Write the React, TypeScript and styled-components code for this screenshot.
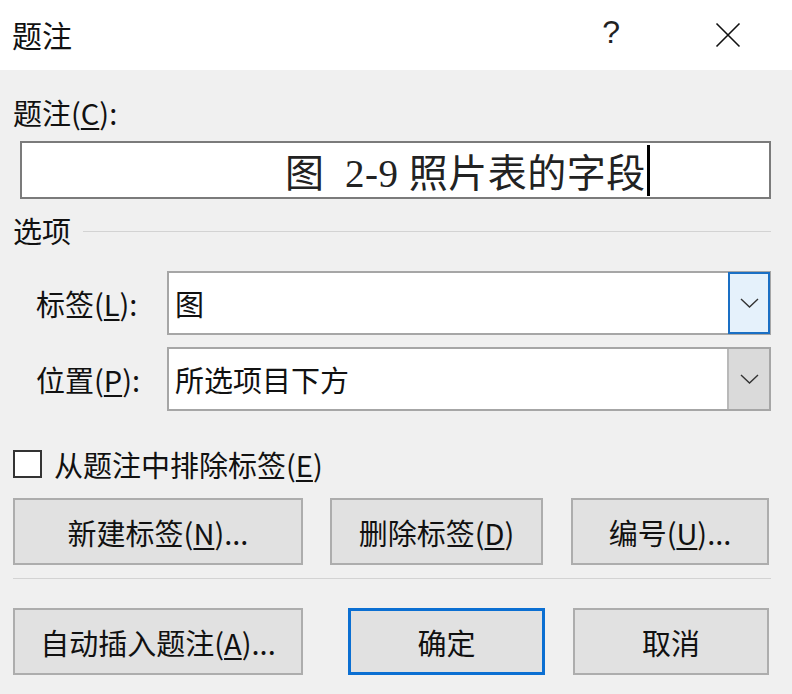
import React from 'react'
import styled, { createGlobalStyle } from 'styled-components'

const GlobalStyle = createGlobalStyle`
  html, body {
    margin: 0;
    padding: 0;
    background: #f0f0f0;
  }
  body {
    font-family: "Noto Sans CJK SC", "Noto Sans", sans-serif;
    color: #111;
  }
`

const Window = styled.div`
  width: 792px;
  height: 694px;
  display: flex;
  flex-direction: column;
  background: #f0f0f0;
  overflow: hidden;
`

const TitleBar = styled.div`
  height: 70px;
  flex: none;
  background: #fff;
  display: flex;
  align-items: center;
  padding-left: 12px;
  padding-right: 51px;
`

const Title = styled.div`
  flex: 1;
  font-size: 30px;
  line-height: 32px;
  margin-top: -2px;
`

const HelpMark = styled.div`
  font-family: "Liberation Sans", sans-serif;
  font-size: 32px;
  line-height: 32px;
  margin-right: 95px;
  margin-top: -6px;
  color: #222;
`

const Body = styled.div`
  flex: 1;
  display: flex;
  flex-direction: column;
  padding: 0 21px 0 13px;
`

const Label = styled.div`
  font-size: 29px;
  line-height: 30px;
  margin-top: 27px;
  white-space: nowrap;
`

const Mn = styled.span`
  text-decoration: underline;
  text-decoration-thickness: 1.5px;
  text-underline-offset: 3px;
`

const CaptionInput = styled.div`
  margin: 14px 0 0 7px;
  height: 58px;
  box-sizing: border-box;
  border: 2px solid #7b7b7b;
  background: #fff;
  display: flex;
  align-items: center;
  padding-left: 263px;
  font-family: "Liberation Serif", "Noto Sans CJK SC", serif;
  font-size: 39px;
  letter-spacing: 0.5px;
  color: #222;
  white-space: pre;
`

const Caret = styled.span`
  display: inline-block;
  width: 3px;
  height: 51px;
  background: #000;
  margin-left: 1px;
`

const GroupHeader = styled.div`
  display: flex;
  align-items: center;
  gap: 12px;
  margin-top: 16px;
  font-size: 29px;
  line-height: 30px;

  &::after {
    content: '';
    flex: 1;
    height: 1px;
    background: #d3d3d3;
    margin-top: 2px;
  }
`

const FieldRow = styled.div<{ $top: number }>`
  display: flex;
  align-items: center;
  height: 64px;
  margin-top: ${p => p.$top}px;
  padding-left: 23px;
`

const FieldLabel = styled.div`
  width: 131px;
  font-size: 29px;
  line-height: 30px;
  white-space: nowrap;
`

const Select = styled.div`
  flex: 1;
  height: 64px;
  box-sizing: border-box;
  border: 2px solid #a6a6a6;
  background: #fff;
  display: flex;
  align-items: stretch;
`

const SelectValue = styled.div`
  flex: 1;
  display: flex;
  align-items: center;
  padding-left: 6px;
  font-size: 29px;
`

const DropButton = styled.div<{ $focused?: boolean }>`
  width: 42px;
  box-sizing: border-box;
  display: flex;
  align-items: center;
  justify-content: center;
  margin: ${p => (p.$focused ? '-1px -1px -1px 0' : '0')};
  border: ${p => (p.$focused ? '2px solid #1a6fc4' : '0')};
  border-left: ${p => (p.$focused ? '2px solid #1a6fc4' : '2px solid #b9b9b9')};
  background: ${p => (p.$focused ? '#e5f1fb' : '#dadada')};
`

const CheckRow = styled.label`
  display: flex;
  align-items: center;
  gap: 12px;
  margin-top: 39px;
  height: 28px;
  font-size: 29px;
  white-space: nowrap;
`

const CheckBox = styled.span`
  width: 29px;
  height: 28px;
  box-sizing: border-box;
  border: 2px solid #333;
  background: #fff;
  flex: none;
`

const ButtonRow = styled.div<{ $top: number }>`
  display: flex;
  margin-top: ${p => p.$top}px;
`

const Button = styled.div<{ $w: number; $gap?: number; $primary?: boolean }>`
  width: ${p => p.$w}px;
  margin-left: ${p => p.$gap ?? 0}px;
  height: 67px;
  box-sizing: border-box;
  border: ${p => (p.$primary ? '3px solid #0b6fd2' : '2px solid #adadad')};
  background: #e1e1e1;
  display: flex;
  align-items: center;
  justify-content: center;
  font-size: 29px;
  color: #111;
  white-space: nowrap;
`

const Separator = styled.div`
  height: 1px;
  background: #d3d3d3;
  margin-top: 13px;
`

const Chevron = () => (
  <svg width="19" height="10" viewBox="0 0 19 10">
    <polyline points="1,1 9.5,9 18,1" fill="none" stroke="#333" strokeWidth="1.4" />
  </svg>
)

const CloseIcon = () => (
  <svg width="26" height="26" viewBox="0 0 26 26">
    <path d="M1.5 1.5 L24.5 24.5 M24.5 1.5 L1.5 24.5" stroke="#111" strokeWidth="1.6" fill="none" />
  </svg>
)

export default function App() {
  return (
    <Window>
      <GlobalStyle />
      <TitleBar>
        <Title>题注</Title>
        <HelpMark>?</HelpMark>
        <CloseIcon />
      </TitleBar>
      <Body>
        <Label>
          题注(<Mn>C</Mn>):
        </Label>
        <CaptionInput>
          {'图  2-9 照片表的字段'}
          <Caret />
        </CaptionInput>

        <GroupHeader>选项</GroupHeader>

        <FieldRow $top={26}>
          <FieldLabel>
            标签(<Mn>L</Mn>):
          </FieldLabel>
          <Select>
            <SelectValue>图</SelectValue>
            <DropButton $focused>
              <Chevron />
            </DropButton>
          </Select>
        </FieldRow>
        <FieldRow $top={12}>
          <FieldLabel>
            位置(<Mn>P</Mn>):
          </FieldLabel>
          <Select>
            <SelectValue>所选项目下方</SelectValue>
            <DropButton>
              <Chevron />
            </DropButton>
          </Select>
        </FieldRow>

        <CheckRow>
          <CheckBox />
          <span>
            从题注中排除标签(<Mn>E</Mn>)
          </span>
        </CheckRow>

        <ButtonRow $top={20}>
          <Button $w={290}>
            新建标签(<Mn>N</Mn>)...
          </Button>
          <Button $w={213} $gap={27}>
            删除标签(<Mn>D</Mn>)
          </Button>
          <Button $w={198} $gap={28}>
            编号(<Mn>U</Mn>)...
          </Button>
        </ButtonRow>

        <Separator />

        <ButtonRow $top={29}>
          <Button $w={290}>
            自动插入题注(<Mn>A</Mn>)...
          </Button>
          <Button $w={197} $gap={45} $primary>
            确定
          </Button>
          <Button $w={196} $gap={28}>
            取消
          </Button>
        </ButtonRow>
      </Body>
    </Window>
  )
}
